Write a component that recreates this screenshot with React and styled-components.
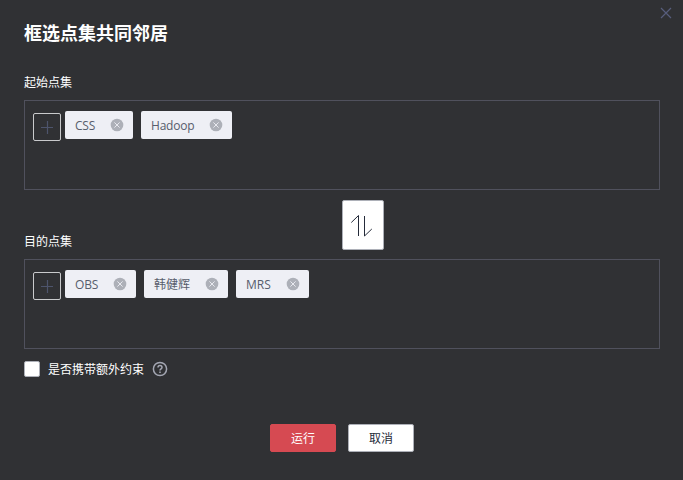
import React from "react";
import styled, { createGlobalStyle } from "styled-components";

const GlobalStyle = createGlobalStyle`
  *, *::before, *::after { box-sizing: border-box; }
  body { margin: 0; background: #303134; }
  button { font: inherit; margin: 0; padding: 0; cursor: pointer; }
`;

const Dialog = styled.main`
  position: relative;
  display: flex;
  flex-direction: column;
  height: 480px;
  padding: 20px 23px 0 24px;
  overflow: hidden;
  background: #303134;
  color: #fff;
  font: 12px/18px "Open Sans", "Noto Sans CJK SC", sans-serif;
`;

const CloseButton = styled.button`
  position: absolute;
  top: 7px;
  right: 11px;
  width: 12px;
  height: 12px;
  border: 0;
  background: none;
  color: #575d7c;
  svg { display: block; }
`;

const Title = styled.h1`
  margin: 0;
  height: 26px;
  font-size: 18px;
  line-height: 26px;
  font-weight: 700;
`;

const Label = styled.h2`
  margin: ${(p) => p.$top}px 0 9px;
  height: 18px;
  font-size: 12px;
  line-height: 20px;
  font-weight: 400;
`;

const NodeSet = styled.section`
  display: flex;
  align-items: flex-start;
  height: 90px;
  padding: 10px 8px;
  border: 1px solid #50515d;
`;

const AddButton = styled.button`
  display: grid;
  place-items: center;
  width: 28px;
  height: 28px;
  margin: 2px 4px 0 0;
  border: 1px solid #c9cacc;
  border-radius: 2px;
  background: transparent;
  color: #4d546c;
`;

const TagList = styled.div`
  display: flex;
  gap: 8px;
`;

const Tag = styled.span`
  display: flex;
  align-items: center;
  justify-content: space-between;
  width: ${(p) => p.$width}px;
  height: 28px;
  padding: 0 10px;
  border-radius: 2px;
  background: #eeeff5;
  color: #575d6c;
  letter-spacing: ${(p) => p.$tracking}px;
  white-space: nowrap;
`;

const TagText = styled.span`
  padding-top: 2px;
`;

const RemoveButton = styled.button`
  width: 12px;
  height: 12px;
  border: 0;
  background: none;
  svg { display: block; overflow: visible; }
`;

const SwapButton = styled.button`
  display: grid;
  place-items: center;
  flex: none;
  width: 42px;
  height: 50px;
  margin: 10px 0 -28px 318px;
  border: 1px solid #adb0b8;
  border-radius: 2px;
  background: #fff;
  color: #252b3a;
  svg { overflow: visible; }
`;

const Constraint = styled.div`
  display: flex;
  align-items: center;
  height: 18px;
  margin-top: 11px;
`;

const CheckRow = styled.label`
  display: flex;
  align-items: center;
  gap: 8px;
`;

const CheckText = styled.span`
  padding-top: 2px;
`;

const Checkbox = styled.input`
  appearance: none;
  width: 16px;
  height: 16px;
  margin: 0;
  border: 1px solid #adb0b8;
  border-radius: 2px;
  background: #fff;
`;

const HelpIcon = styled.svg`
  margin-left: 8px;
  color: #a4a7b3;
`;

const Footer = styled.footer`
  display: flex;
  gap: 12px;
  margin: 46px 0 0 246px;
`;

const ActionButton = styled.button`
  width: 66px;
  height: 28px;
  padding-top: 2px;
  border: 1px solid ${(p) => (p.$primary ? "#d64a52" : "#adb0b8")};
  border-radius: 2px;
  background: ${(p) => (p.$primary ? "#d64a52" : "#fff")};
  color: ${(p) => (p.$primary ? "#fff" : "#252b3a")};
`;

const sources = [
  { name: "CSS", width: 68, tracking: -0.2 },
  { name: "Hadoop", width: 91, tracking: -0.2 },
];
const targets = [
  { name: "OBS", width: 71, tracking: -0.2 },
  { name: "韩健辉", width: 84, tracking: 0 },
  { name: "MRS", width: 73, tracking: 0 },
];

function NodePicker({ nodes }) {
  return (
    <NodeSet>
      <AddButton aria-label="添加">
        <svg width="14" height="14" viewBox="0 0 14 14" stroke="currentColor" fill="none">
          <path d="M1 7.5h12M7.5 1v13" strokeWidth="1.2" />
        </svg>
      </AddButton>
      <TagList>
        {nodes.map((node) => (
          <Tag key={node.name} $width={node.width} $tracking={node.tracking}>
            <TagText>{node.name}</TagText>
            <RemoveButton aria-label="移除">
              <svg width="12" height="12" viewBox="0 0 12 12">
                <circle cx="6" cy="6" r="6.3" fill="#adb0b8" />
                <path d="M3.4 3.4l5.2 5.2m0-5.2l-5.2 5.2" stroke="#eeeff5" strokeWidth=".9" />
              </svg>
            </RemoveButton>
          </Tag>
        ))}
      </TagList>
    </NodeSet>
  );
}

export default function App() {
  return (
    <>
      <GlobalStyle />
      <Dialog>
        <CloseButton aria-label="关闭">
          <svg width="12" height="12" viewBox="0 0 12 12" stroke="currentColor" strokeWidth="1.2">
            <path d="M1 1l10 10M11 1L1 11" />
          </svg>
        </CloseButton>
        <Title>框选点集共同邻居</Title>
        <Label $top={27}>起始点集</Label>
        <NodePicker nodes={sources} />
        <SwapButton aria-label="交换">
          <svg width="22" height="22" viewBox="0 0 22 22" fill="none" stroke="currentColor" strokeLinejoin="bevel">
            <path d="M6.5 22V1.5L-.7 8.5M12.5 2v20L19.8 15" />
          </svg>
        </SwapButton>
        <Label $top={10}>目的点集</Label>
        <NodePicker nodes={targets} />
        <Constraint>
          <CheckRow>
            <Checkbox type="checkbox" />
            <CheckText>是否携带额外约束</CheckText>
          </CheckRow>
          <HelpIcon width="16" height="16" viewBox="0 0 16 16" fill="none" stroke="currentColor" strokeWidth="1.5">
            <circle cx="8" cy="8" r="6.6" />
            <path d="M6 6.5C6 3.8 10 3.9 10 6.4C10 7.9 8 7.7 8 9.5M8 10.5v1.4" />
          </HelpIcon>
        </Constraint>
        <Footer>
          <ActionButton $primary>运行</ActionButton>
          <ActionButton>取消</ActionButton>
        </Footer>
      </Dialog>
    </>
  );
}
